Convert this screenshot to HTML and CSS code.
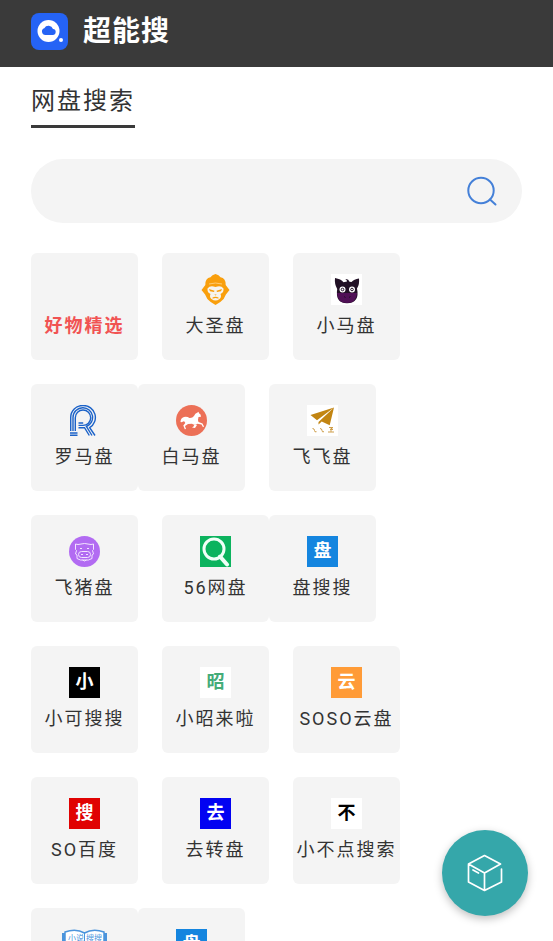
FILE: index.html
```html
<!DOCTYPE html>
<html lang="zh-CN">
<head>
<meta charset="utf-8">
<meta name="viewport" content="width=device-width, initial-scale=1">
<title>超能搜</title>
<link rel="stylesheet" href="styles.css">
</head>
<body>
<div class="page">
  <header class="header">
    <svg class="logo" viewBox="0 0 37 37" aria-hidden="true">
      <rect width="37" height="37" rx="8" fill="#2563f5"/>
      <circle cx="17.5" cy="18" r="11" fill="#fff"/>
      <path d="M14.500 22h6.800a3 3 0 0 0 .7-6 4.800 4.800 0 0 0-8.700-.8 3.500 3.500 0 0 0 1.200 6.800z" fill="#2563f5"/>
      <circle cx="30" cy="27" r="2" fill="#fff"/>
    </svg>
    <h1 class="brand">超能搜</h1>
  </header>
  <main class="content">
    <h2 class="tab">网盘搜索</h2>
    <form class="search">
      <input class="search-input" type="text" aria-label="网盘搜索">
      <button class="search-button" type="button" aria-label="搜索">
        <svg class="search-icon" viewBox="0 0 32 32" fill="none" stroke="#4480d8" stroke-width="2" stroke-linecap="round"><circle cx="15" cy="15.500" r="12.700"/><path d="M24 24.500l5.500 5"/></svg>
      </button>
    </form>
    <nav class="sites">
      <div class="row">
        <a class="card" href="#"><span class="icon"></span><span class="label hot">好物精选</span></a>
        <a class="card" href="#">
          <svg class="icon" viewBox="0 0 31 31"><path d="M10.500 3.200Q12 1 15.500 0q3.500 1 5 3.200 5.500 1 5.200 7.800L29.500 16l-3.600 4.500q-1.600 5-5.600 7.500l-4.800 3-4.800-3q-4-2.500-5.600-7.500L1.500 16 5.300 11q-.3-6.800 5.200-7.800z" fill="#f99f0c"/><path d="M9 10q6.500-2 13 0" fill="none" stroke="#ffd58b" stroke-width=".8"/><path d="M7.500 14.500q2.500-3.500 8-1.500 5.500-2 8 1.500.5 4-3 5.500 1.400 3-1 5-4 3-8 0-2.400-2-1-5-3.500-1.500-3-5.500z" fill="#f6f4ef"/><path d="M9 15l5.500 1.700-.5 1.300-4-.8zM22 15l-5.500 1.700.5 1.300 4-.8zM12 24q3.500-2.500 7 0l-1 .5q-2.500-1-5 0zM14.300 20.500h2.400l-1.200 1z" fill="#f99f0c"/></svg>
          <span class="label">大圣盘</span></a>
        <a class="card" href="#">
          <svg class="icon" viewBox="0 0 31 31"><path fill="#fff" d="M0 0h31v31H0z"/><path d="M4 4q6 1 8.500 4.200L16 7.500q0-1.800-1.700-2.500Q17.500 4.500 18.500 7.700L20.500 8Q23 5 28 4.500q.7 6-2 10 3 14.500-10 14.800Q4 29 6.200 15 3.300 10 4 4z" fill="#211025"/><path d="M6 19h20q-.5 10-10 10T6 19z" fill="#501056"/><circle cx="11.500" cy="15.500" r="3" fill="#fff"/><circle cx="21" cy="15.500" r="3" fill="#fff"/><circle cx="11.500" cy="15.500" r="1.300" fill="#fff" stroke="#211025"/><circle cx="21" cy="15.500" r="1.300" fill="#fff" stroke="#211025"/><path d="M13 22.500l1.500 1M19.500 22.500l-1.500 1" stroke="#211025"/></svg>
          <span class="label">小马盘</span></a>
      </div>
      <div class="row">
        <a class="card flush" href="#">
          <svg class="icon" viewBox="0 0 31 31" fill="none" stroke="#1b62c8" stroke-width="1.400"><path d="M1.700 26V12.500a12 12 0 0 1 12-12h.6a12 12 0 0 1 6.400 22.200L26 30.500M4 26V12.500A9.700 9.700 0 0 1 14 2.800a9.700 9.700 0 0 1 3.500 18.700L23 30.500M6.300 26V12.700A7.700 7.700 0 0 1 14 5a7.700 7.700 0 0 1 0 15.400H9.500M9.500 22.700h6l4.800 7.800M9.500 18h4.700M1 28h7.500M1 30.300h7.500"/></svg>
          <span class="label">罗马盘</span></a>
        <a class="card" href="#">
          <svg class="icon" viewBox="0 0 31 31"><circle cx="15.500" cy="15.500" r="15.500" fill="#ec7057"/><path d="M4.500 17q0-4 3.500-5 3-.7 5.500 1 3 .2 4.500-2 1-3 3.500-3.500l1-.8.5 1.600q2 1 2 3.400l-2.500.3q-1 3 0 5l4 1.500 1.500 3-1 .8-1.500-2.800-4-.8q-3 1.700-5.500 0l-4 .3-3 2 1 3-1.200.2-1.500-3.700 2-2.500q-1-2.500-2-1.500-2 1-2.800.5zM21 20l-2 3-3-.5 1.500-1 1-2z" fill="#fff"/></svg>
          <span class="label">白马盘</span></a>
        <a class="card" href="#">
          <svg class="icon" viewBox="0 0 31 31"><path fill="#fff" d="M0 0h31v31H0z"/><path d="M27 2.500L3.500 10l6.500 5.300zM27 2.500L11.500 17v2.500l3.200-3 8 3.800z" fill="#c28512"/><path d="M5.500 23.500q2 0 2 2t2 1.200M13 23.500q2 0 2 2t2 1.200M22 22.500h4l-3 2h3M21 27h6M24 24.500v2.300" fill="none" stroke="#ce9e4a"/></svg>
          <span class="label">飞飞盘</span></a>
      </div>
      <div class="row">
        <a class="card" href="#">
          <svg class="icon" viewBox="0 0 31 31"><circle cx="15.500" cy="15.500" r="15.500" fill="#b26bf2"/><g fill="none" stroke="#f3e5ff"><path d="M9 8.500q6.500-2 13 0l2.500-.5v5.500l-1 1 1 3.500-1.500 1v3.500L19.500 24h-8L8 22.500V19l-1.500-1 1-3.500-1-1V8z"/><rect x="9.500" y="15.500" width="12" height="6" rx="3"/><path d="M12 18.500h2M17 18.500h2M11 12.500h2M18 12.500h2M13.500 24l2 1 2-1"/></g></svg>
          <span class="label">飞猪盘</span></a>
        <a class="card flush" href="#">
          <svg class="icon" viewBox="0 0 31 31"><path d="M0 0h31v31H0z" fill="#0cb35e"/><circle cx="14" cy="13" r="10" fill="none" stroke="#f1fff7" stroke-width="3"/><path d="M20 20.500l7 8" stroke="#f1fff7" stroke-width="4" stroke-linecap="round"/></svg>
          <span class="label">56网盘</span></a>
        <a class="card" href="#"><span class="icon blue">盘</span><span class="label">盘搜搜</span></a>
      </div>
      <div class="row">
        <a class="card" href="#"><span class="icon black">小</span><span class="label">小可搜搜</span></a>
        <a class="card" href="#"><span class="icon green">昭</span><span class="label">小昭来啦</span></a>
        <a class="card" href="#"><span class="icon orange">云</span><span class="label">SOSO云盘</span></a>
      </div>
      <div class="row">
        <a class="card" href="#"><span class="icon red">搜</span><span class="label">SO百度</span></a>
        <a class="card" href="#"><span class="icon navy">去</span><span class="label">去转盘</span></a>
        <a class="card" href="#"><span class="icon white">不</span><span class="label">小不点搜索</span></a>
      </div>
      <div class="row">
        <a class="card flush" href="#">
          <svg class="icon wide" viewBox="0 0 45 31"><path d="M3 4H0v21h20l2.500 2 2.500-2h20V4h-3v18H3z" fill="#4b94dc"/><path d="M3 3Q14-1 22.500 4 31-1 42 3v19q-12-3-19.500 1Q15 19 3 22z" fill="#fff" stroke="#4b94dc" stroke-width="1.500"/><path d="M22.500 4v19" stroke="#4b94dc"/><text class="book-text" x="6" y="12">小说</text><text class="book-text" x="24" y="12">搜搜</text></svg></a>
        <a class="card" href="#"><span class="icon blue">盘</span></a>
      </div>
    </nav>
  </main>
</div>
<button class="fab" type="button" aria-label="工具箱">
  <svg class="fab-icon" viewBox="0 0 36 38" fill="none" stroke="#fff" stroke-width="1.700" stroke-linecap="round" stroke-linejoin="round"><path d="M1.500 10L17.500 1.500 33.500 10 17.500 19zM1.500 10v18l16 8.500 17-8.500V15M17.500 19v17.500M6 16l5.500 3"/></svg>
</button>
</body>
</html>
```
FILE: styles.css
```css
* { box-sizing: border-box; }

body {
  margin: 0;
  background: #fff;
  color: #333;
  font-family: Roboto, "Noto Sans CJK SC", sans-serif;
}

.page {
  height: 100vh;
  overflow-y: auto;
  scrollbar-width: none;
}

.header {
  display: flex;
  align-items: center;
  gap: 15px;
  height: 67px;
  padding: 0 31px 4px;
  background: #3a3a3a;
}

.logo { width: 37px; height: 37px; }

.brand {
  margin: 0;
  color: #fff;
  font-size: 28px;
  line-height: 36px;
  letter-spacing: 1px;
}

.content { padding: 18px 31px 0; }

.tab {
  width: fit-content;
  margin: 0 0 31px;
  padding-bottom: 8px;
  border-bottom: 3px solid #3a3a3a;
  font-size: 24px;
  font-weight: 400;
  line-height: 32px;
  letter-spacing: 2px;
}

.search {
  display: flex;
  align-items: center;
  height: 64px;
  margin-bottom: 30px;
  padding: 0 24px;
  border-radius: 32px;
  background: #f4f4f4;
}

.search-input {
  flex: 1;
  min-width: 0;
  height: 48px;
  border: 0;
  outline: 0;
  background: transparent;
  font: inherit;
  font-size: 18px;
}

.search-button {
  padding: 0;
  border: 0;
  background: transparent;
}

.search-icon { display: block; width: 32px; height: 32px; }

.row { display: flex; margin-bottom: 24px; }

.card {
  display: flex;
  flex: none;
  flex-direction: column;
  align-items: center;
  width: 107px;
  height: 107px;
  margin-right: 24px;
  padding-top: 21px;
  border-radius: 6px;
  background: #f4f4f4;
  color: #333;
  text-decoration: none;
}

.flush { margin-right: 0; }

.icon {
  display: block;
  flex: none;
  width: 31px;
  height: 31px;
  font-size: 18px;
  font-weight: 700;
  line-height: 30px;
  text-align: center;
}

.wide { width: 45px; }

.label {
  margin-top: 9px;
  font-size: 18px;
  font-weight: 400;
  line-height: 24px;
  letter-spacing: 2px;
  white-space: nowrap;
}

.hot { color: #f15353; font-weight: 700; }

.blue { background: #1485df; color: #fff; }
.black { background: #000; color: #fff; }
.green { background: #fff; color: #44ac78; }
.orange { background: #ff9b37; color: #fff; }
.red { background: #e00202; color: #fff; }
.navy { background: #0202f2; color: #fff; }
.white { background: #fff; color: #000; }

.book-text { fill: #4b94dc; font-size: 8px; font-weight: 400; }

.fab {
  position: fixed;
  right: 25px;
  bottom: 25px;
  display: grid;
  place-items: center;
  width: 86px;
  height: 86px;
  padding: 0;
  border: 0;
  border-radius: 50%;
  background: #35a7aa;
  box-shadow: 0 3px 8px rgba(0, 0, 0, 0.25);
}

.fab-icon { width: 36px; height: 38px; }
```
